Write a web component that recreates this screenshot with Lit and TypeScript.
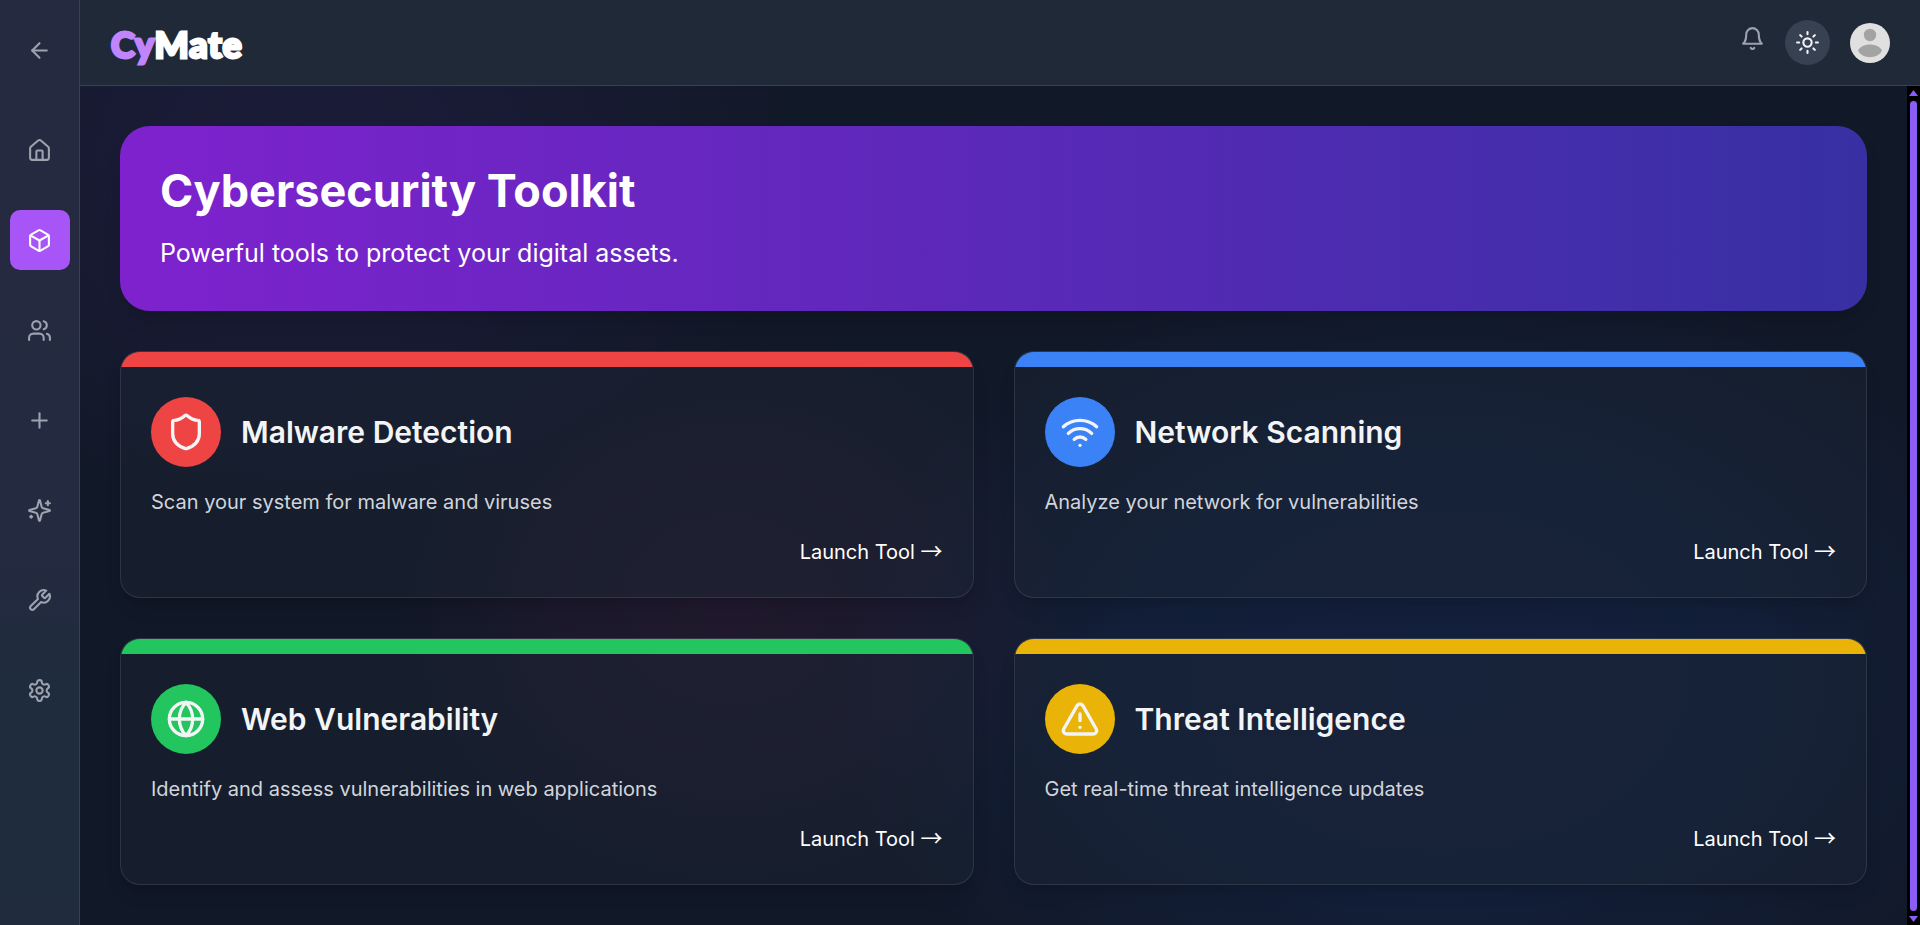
import { LitElement, html, css, svg } from "lit";
import { customElement, property } from "lit/decorators.js";

const icons: Record<string, unknown> = {
  back: svg`<path d="m12 19-7-7 7-7"/><path d="M19 12H5"/>`,
  home: svg`<path d="M15 21v-8a1 1 0 0 0-1-1h-4a1 1 0 0 0-1 1v8"/><path d="M3 10a2 2 0 0 1 .709-1.528l7-5.999a2 2 0 0 1 2.582 0l7 5.999A2 2 0 0 1 21 10v9a2 2 0 0 1-2 2H5a2 2 0 0 1-2-2z"/>`,
  box: svg`<path d="M21 8a2 2 0 0 0-1-1.73l-7-4a2 2 0 0 0-2 0l-7 4A2 2 0 0 0 3 8v8a2 2 0 0 0 1 1.73l7 4a2 2 0 0 0 2 0l7-4A2 2 0 0 0 21 16Z"/><path d="m3.3 7 8.7 5 8.7-5"/><path d="M12 22V12"/>`,
  users: svg`<path d="M16 21v-2a4 4 0 0 0-4-4H6a4 4 0 0 0-4 4v2"/><circle cx="9" cy="7" r="4"/><path d="M22 21v-2a4 4 0 0 0-3-3.87"/><path d="M16 3.13a4 4 0 0 1 0 7.75"/>`,
  plus: svg`<path d="M5 12h14"/><path d="M12 5v14"/>`,
  sparkles: svg`<path d="M9.937 15.5A2 2 0 0 0 8.5 14.063l-6.135-1.582a.5.5 0 0 1 0-.962L8.5 9.936A2 2 0 0 0 9.937 8.5l1.582-6.135a.5.5 0 0 1 .963 0L14.063 8.5A2 2 0 0 0 15.5 9.937l6.135 1.581a.5.5 0 0 1 0 .964L15.5 14.063a2 2 0 0 0-1.437 1.437l-1.582 6.135a.5.5 0 0 1-.963 0z"/><path d="M20 3v4"/><path d="M22 5h-4"/><path d="M4 17v2"/><path d="M5 18H3"/>`,
  wrench: svg`<path d="M14.7 6.3a1 1 0 0 0 0 1.4l1.6 1.6a1 1 0 0 0 1.4 0l3.77-3.77a6 6 0 0 1-7.94 7.94l-6.91 6.91a2.12 2.12 0 0 1-3-3l6.91-6.91a6 6 0 0 1 7.94-7.94l-3.76 3.76z"/>`,
  settings: svg`<path d="M12.22 2h-.44a2 2 0 0 0-2 2v.18a2 2 0 0 1-1 1.73l-.43.25a2 2 0 0 1-2 0l-.15-.08a2 2 0 0 0-2.73.73l-.22.38a2 2 0 0 0 .73 2.73l.15.1a2 2 0 0 1 1 1.72v.51a2 2 0 0 1-1 1.74l-.15.09a2 2 0 0 0-.73 2.73l.22.38a2 2 0 0 0 2.73.73l.15-.08a2 2 0 0 1 2 0l.43.25a2 2 0 0 1 1 1.73V20a2 2 0 0 0 2 2h.44a2 2 0 0 0 2-2v-.18a2 2 0 0 1 1-1.73l.43-.25a2 2 0 0 1 2 0l.15.08a2 2 0 0 0 2.73-.73l.22-.39a2 2 0 0 0-.73-2.73l-.15-.08a2 2 0 0 1-1-1.74v-.5a2 2 0 0 1 1-1.74l.15-.09a2 2 0 0 0 .73-2.73l-.22-.38a2 2 0 0 0-2.73-.73l-.15.08a2 2 0 0 1-2 0l-.43-.25a2 2 0 0 1-1-1.73V4a2 2 0 0 0-2-2z"/><circle cx="12" cy="12" r="3"/>`,
  bell: svg`<path d="M6 8a6 6 0 0 1 12 0c0 7 3 9 3 9H3s3-2 3-9"/><path d="M10.3 21a1.94 1.94 0 0 0 3.4 0"/>`,
  sun: svg`<circle cx="12" cy="12" r="4"/><path d="M12 2v2M12 20v2M4.93 4.93l1.41 1.41M17.66 17.66l1.41 1.41M2 12h2M20 12h2M6.34 17.66l-1.41 1.41M19.07 4.93l-1.41 1.41"/>`,
  shield: svg`<path d="M20 13c0 5-3.5 7.5-7.66 8.95a1 1 0 0 1-.67-.01C7.5 20.5 4 18 4 13V6a1 1 0 0 1 1-1c2 0 4.5-1.2 6.24-2.72a1.17 1.17 0 0 1 1.52 0C14.51 3.81 17 5 19 5a1 1 0 0 1 1 1z"/>`,
  wifi: svg`<path d="M12 20h.01"/><path d="M2 8.82a15 15 0 0 1 20 0"/><path d="M5 12.859a10 10 0 0 1 14 0"/><path d="M8.5 16.429a5 5 0 0 1 7 0"/>`,
  globe: svg`<circle cx="12" cy="12" r="10"/><path d="M12 2a14.5 14.5 0 0 0 0 20 14.5 14.5 0 0 0 0-20"/><path d="M2 12h20"/>`,
  alert: svg`<path d="m21.73 18-8-14a2 2 0 0 0-3.48 0l-8 14A2 2 0 0 0 4 21h16a2 2 0 0 0 1.73-3"/><path d="M12 9v4"/><path d="M12 17h.01"/>`,
};

@customElement("line-icon")
class LineIcon extends LitElement {
  @property() name = "";
  static styles = css`
    :host { display: block; width: 25px; height: 25px; flex: none; }
    svg { display: block; width: 100%; height: 100%; fill: none; stroke: currentColor; stroke-width: 2; stroke-linecap: round; stroke-linejoin: round; }
  `;
  render() {
    return html`<svg viewBox="0 0 24 24">${icons[this.name]}</svg>`;
  }
}

@customElement("tool-card")
class ToolCard extends LitElement {
  @property() icon = "";
  @property() heading = "";
  @property() text = "";
  @property({ reflect: true }) tone = "";
  static styles = css`
    :host { display: block; box-sizing: border-box; border: 1px solid rgba(255, 255, 255, 0.1); border-radius: 20px; overflow: hidden;
      background: rgba(31, 41, 55, 0.4); box-shadow: 0 12px 19px -4px rgba(0, 0, 0, 0.12), 0 5px 8px -5px rgba(0, 0, 0, 0.12); color: #f3f4f6; }
    :host([tone="red"]) { --tone: #ef4444; }
    :host([tone="blue"]) { --tone: #3b82f6; }
    :host([tone="green"]) { --tone: #22c55e; }
    :host([tone="yellow"]) { --tone: #eab308; }
    .strip { height: 15px; background: var(--tone); }
    .body { padding: 30px; display: flex; flex-direction: column; gap: 20px; }
    .head { display: flex; align-items: center; gap: 20px; }
    .disc { padding: 15px; border-radius: 50%; background: var(--tone); }
    .disc line-icon { width: 40px; height: 40px; }
    h2 { margin: 0; font-size: 30px; line-height: 40px; font-weight: 600; }
    p { margin: 0; font-size: 20px; line-height: 30px; color: #d1d5db; }
    .launch { align-self: flex-end; font-size: 20px; line-height: 30px; height: 30px; font-weight: 400; color: #fff; white-space: nowrap; }
    .arrow { font-family: "Noto Sans CJK JP", sans-serif; font-size: 22px; line-height: 1; }
  `;
  render() {
    return html`<div class="strip"></div>
      <div class="body">
        <div class="head"><div class="disc"><line-icon name=${this.icon}></line-icon></div><h2>${this.heading}</h2></div>
        <p>${this.text}</p>
        <span class="launch">Launch Tool <span class="arrow">→</span></span>
      </div>`;
  }
}

@customElement("app-root")
class AppRoot extends LitElement {
  static styles = css`
    :host { display: flex; height: 100vh; overflow: hidden; font-family: Inter, "Liberation Sans", sans-serif; color: #f3f4f6;
      background:
        radial-gradient(ellipse 500px 370px at 310px 150px, rgba(130, 60, 225, 0.09), rgba(130, 60, 225, 0.07) 40%, transparent),
        radial-gradient(ellipse 340px 290px at 730px 610px, rgba(219, 39, 119, 0.08), rgba(219, 39, 119, 0.05) 50%, transparent),
        radial-gradient(ellipse 620px 430px at 1440px 680px, rgba(37, 99, 235, 0.11), rgba(37, 99, 235, 0.09) 50%, transparent),
        #111827; }
    nav { box-sizing: border-box; width: 80px; flex: none; border-right: 1px solid #374151; padding-top: 20px;
      background: linear-gradient(#262a40, #242a40 60%, #1f2c3e 75%, #202c3e); display: flex; flex-direction: column; align-items: center; gap: 30px; color: #9ca3af; }
    .item { width: 60px; height: 60px; border-radius: 10px; display: grid; place-items: center; }
    .back { margin-bottom: 10px; }
    .active { background: #a855f7; color: #fff; }
    .page { flex: 1; min-width: 0; display: flex; flex-direction: column; }
    header { box-sizing: border-box; height: 86px; flex: none; border-bottom: 1px solid #374151; background: #1f2937; padding: 0 30px;
      display: flex; align-items: center; justify-content: space-between; }
    .logo { font-family: Lato, Inter, sans-serif; font-size: 36px; line-height: 50px; font-weight: 900; letter-spacing: 0.8px; color: #fff;
      -webkit-text-stroke: 2.8px currentColor; stroke-linejoin: round; padding: 3px 0 0 1px; }
    .cy { color: #c084fc; }
    .actions { display: flex; align-items: center; gap: 20px; }
    .bell { color: #9ca3af; padding-bottom: 8px; }
    .theme { width: 45px; height: 45px; border-radius: 50%; background: #374151; display: grid; place-items: center; color: #f3f4f6; }
    .avatar { width: 40px; height: 40px; display: block; }
    .scroll { flex: 1; min-height: 0; display: flex; }
    main { flex: 1; padding: 40px; display: flex; flex-direction: column; gap: 40px; }
    .banner { padding: 40px; border-radius: 30px; background: linear-gradient(to right, #7e22ce, #3730a3); box-shadow: 0 12px 19px -4px rgba(0, 0, 0, 0.14);
      display: flex; flex-direction: column; gap: 20px; color: #fff; }
    h1 { margin: 0; font-size: 45px; line-height: 50px; font-weight: 700; }
    .banner p { margin: 0; font-size: 25px; line-height: 35px; }
    .grid { display: grid; grid-template-columns: 1fr 1fr; gap: 40px; }
    .bar { width: 13px; background: #000; display: flex; flex-direction: column; align-items: center; gap: 5px; padding: 4px 0 3px; box-sizing: border-box; }
    .thumb { flex: 1; width: 7px; border-radius: 4px; background: #8b5cf6; }
    .bar svg { width: 9px; height: 6px; fill: #8b5cf6; display: block; }
  `;
  render() {
    return html`
      <nav>
        <div class="item back"><line-icon name="back"></line-icon></div>
        ${["home", "box", "users", "plus", "sparkles", "wrench", "settings"].map(
          (n) => html`<div class="item ${n === "box" ? "active" : ""}"><line-icon name=${n}></line-icon></div>`
        )}
      </nav>
      <div class="page">
        <header>
          <div class="logo"><span class="cy">Cy</span>Mate</div>
          <div class="actions">
            <div class="bell"><line-icon name="bell"></line-icon></div>
            <div class="theme"><line-icon name="sun"></line-icon></div>
            <svg class="avatar" viewBox="0 0 40 40"><circle cx="20" cy="20" r="20" fill="#e0e0e0"/><circle cx="20" cy="12" r="6.2" fill="#a3a3a3"/><path d="M8 27.500C10 23.500 15 21.500 20 21.500s10 2 12 6c-2 4.500-7 6.700-12 6.700S10 32 8 27.500Z" fill="#a3a3a3"/></svg>
          </div>
        </header>
        <div class="scroll">
          <main>
            <section class="banner"><h1>Cybersecurity Toolkit</h1><p>Powerful tools to protect your digital assets.</p></section>
            <section class="grid">
              <tool-card tone="red" icon="shield" heading="Malware Detection" text="Scan your system for malware and viruses"></tool-card>
              <tool-card tone="blue" icon="wifi" heading="Network Scanning" text="Analyze your network for vulnerabilities"></tool-card>
              <tool-card tone="green" icon="globe" heading="Web Vulnerability" text="Identify and assess vulnerabilities in web applications"></tool-card>
              <tool-card tone="yellow" icon="alert" heading="Threat Intelligence" text="Get real-time threat intelligence updates"></tool-card>
            </section>
          </main>
          <div class="bar">
            <svg viewBox="0 0 9 6"><path d="M4.500 0 9 6H0Z"/></svg>
            <div class="thumb"></div>
            <svg viewBox="0 0 9 6"><path d="M4.500 6 9 0H0Z"/></svg>
          </div>
        </div>
      </div>`;
  }
}
